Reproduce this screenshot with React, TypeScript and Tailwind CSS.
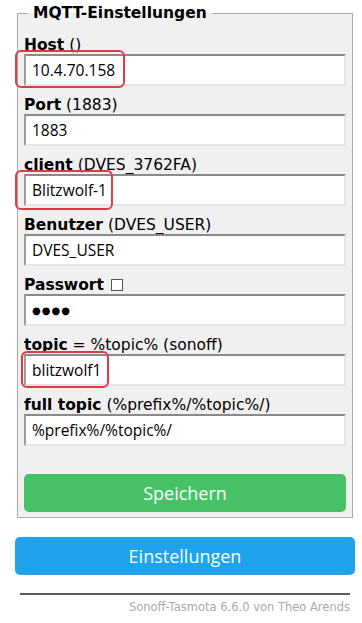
import React from "react";

const labelFont = { fontFamily: '"DejaVu Sans", Verdana, sans-serif' };
const uiFont = { fontFamily: '"Open Sans", "Noto Sans", sans-serif' };

function Row({
  bold,
  rest,
  value,
  extra,
  highlight,
  dots,
}: {
  bold: string;
  rest?: string;
  value: string;
  extra?: React.ReactNode;
  highlight?: string;
  dots?: boolean;
}) {
  return (
    <div className="mb-[10px]">
      <div className="h-[18px] leading-[18px] text-[15.5px] text-black whitespace-nowrap flex items-center" style={labelFont}>
        <b>{bold}</b>
        {rest ? <span>&nbsp;{rest}</span> : null}
        {extra}
      </div>
      <div className="relative">
        <input
          readOnly
          type="text"
          value={value}
          className={
            dots
              ? "block w-full h-[32px] bg-white px-[6px] text-[10px] tracking-[1px] text-black border-2 border-t-[#8a8a8a] border-l-[#9c9c9c] border-r-[#e4e4e4] border-b-[#e4e4e4] outline-none"
              : "block w-full h-[32px] bg-white px-[6px] text-[15.5px] text-black border-2 border-t-[#8a8a8a] border-l-[#9c9c9c] border-r-[#e4e4e4] border-b-[#e4e4e4] outline-none"
          }
          style={dots ? labelFont : uiFont}
        />
        {highlight ? <div className={highlight} /> : null}
      </div>
    </div>
  );
}

export default function App() {
  return (
    <div className="w-[362px] h-[623px] bg-white overflow-hidden">
      <div className="ml-[15px] w-[340px] pt-[2px]">
        <fieldset className="mx-[2px] border border-[#a9a9a9] bg-[#f0f0f0] px-[6px] pt-[12px] pb-[5px]">
          <legend
            className="ml-[4px] px-[5px] h-[22px] leading-[22px] text-[15.5px] font-bold text-black"
            style={labelFont}
          >
            MQTT-Einstellungen
          </legend>
          <Row
            bold="Host"
            rest="()"
            value="10.4.70.158"
            highlight="absolute left-[-9px] top-[-4px] w-[110px] h-[38px] border-2 border-[#dc3d45] rounded-[6px] pointer-events-none"
          />
          <Row bold="Port" rest="(1883)" value="1883" />
          <Row
            bold="client"
            rest="(DVES_3762FA)"
            value="Blitzwolf-1"
            highlight="absolute left-[-9px] top-[-4px] w-[98px] h-[40px] border-2 border-[#dc3d45] rounded-[6px] pointer-events-none"
          />
          <Row bold="Benutzer" rest="(DVES_USER)" value="DVES_USER" />
          <Row
            bold="Passwort"
            value="●●●●"
            dots
            extra={<span className="inline-block ml-[7px] w-[12px] h-[12px] border border-[#555] bg-white" />}
          />
          <Row
            bold="topic"
            rest="= %topic% (sonoff)"
            value="blitzwolf1"
            highlight="absolute left-[-3px] top-[-3px] w-[88px] h-[37px] border-2 border-[#dc3d45] rounded-[6px] pointer-events-none"
          />
          <Row bold="full topic" rest="(%prefix%/%topic%/)" value="%prefix%/%topic%/" />
          <button
            className="mt-[28px] block w-full h-[38px] rounded-[5px] bg-[#47c266] text-[#faffff] text-[18px]"
            style={uiFont}
          >
            Speichern
          </button>
        </fieldset>
        <button
          className="mt-[19px] block w-full h-[38px] rounded-[5px] bg-[#1fa3ec] text-[#faffff] text-[18px]"
          style={uiFont}
        >
          Einstellungen
        </button>
        <div className="px-[5px] mt-[18px]">
          <div className="h-[2px] bg-[#5a5a5a]" />
          <div className="text-right text-[11.5px] leading-[20px] text-[#aaaaaa] mt-[2px]" style={labelFont}>
            Sonoff-Tasmota 6.6.0 von Theo Arends
          </div>
        </div>
      </div>
    </div>
  );
}
